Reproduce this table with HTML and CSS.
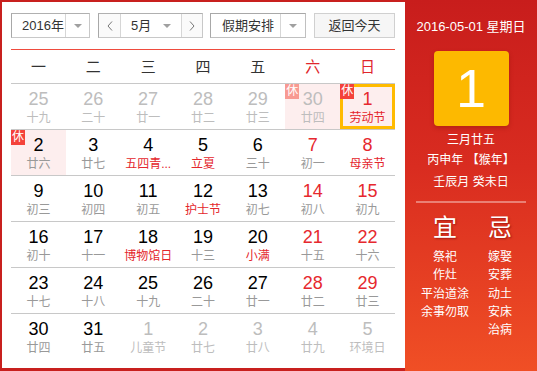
FILE: index.html
```html
<!DOCTYPE html>
<html lang="zh-CN">
<head>
<meta charset="utf-8">
<title>万年历</title>
<link rel="stylesheet" href="styles.css">
</head>
<body>
<div class="cal">
  <div class="main">
    <div class="toolbar">
      <div class="sel sel-year">
        <span class="sel-text">2016年</span>
        <span class="sel-arrow"><i class="tri"></i></span>
      </div>
      <div class="sel sel-month">
        <span class="nav"><svg width="6" height="10" viewBox="0 0 6 10"><polyline points="5,0.5 1,5 5,9.5" fill="none" stroke="#777" stroke-width="1"/></svg></span>
        <span class="month-mid"><span class="sel-text">5月</span><i class="tri"></i></span>
        <span class="nav nav-next"><svg width="6" height="10" viewBox="0 0 6 10"><polyline points="1,0.5 5,5 1,9.5" fill="none" stroke="#777" stroke-width="1"/></svg></span>
      </div>
      <div class="sel sel-holiday">
        <span class="sel-text">假期安排</span>
        <span class="sel-arrow"><i class="tri"></i></span>
      </div>
      <div class="btn-today">返回今天</div>
    </div>

    <div class="grid">
      <div class="head">
        <span>一</span><span>二</span><span>三</span><span>四</span><span>五</span><span class="we">六</span><span class="we">日</span>
      </div>
      <div class="row">
        <div class="cell other"><b>25</b><em>十九</em></div>
        <div class="cell other"><b>26</b><em>二十</em></div>
        <div class="cell other"><b>27</b><em>廿一</em></div>
        <div class="cell other"><b>28</b><em>廿二</em></div>
        <div class="cell other"><b>29</b><em>廿三</em></div>
        <div class="cell other rest"><i class="badge badge-light">休</i><b>30</b><em>廿四</em></div>
        <div class="cell rest cur"><i class="badge">休</i><b class="red">1</b><em class="fest">劳动节</em></div>
      </div>
      <div class="row">
        <div class="cell rest"><i class="badge">休</i><b>2</b><em>廿六</em></div>
        <div class="cell"><b>3</b><em>廿七</em></div>
        <div class="cell"><b>4</b><em class="fest">五四青...</em></div>
        <div class="cell"><b>5</b><em class="fest">立夏</em></div>
        <div class="cell"><b>6</b><em>三十</em></div>
        <div class="cell"><b class="red">7</b><em>初一</em></div>
        <div class="cell"><b class="red">8</b><em class="fest">母亲节</em></div>
      </div>
      <div class="row">
        <div class="cell"><b>9</b><em>初三</em></div>
        <div class="cell"><b>10</b><em>初四</em></div>
        <div class="cell"><b>11</b><em>初五</em></div>
        <div class="cell"><b>12</b><em class="fest">护士节</em></div>
        <div class="cell"><b>13</b><em>初七</em></div>
        <div class="cell"><b class="red">14</b><em>初八</em></div>
        <div class="cell"><b class="red">15</b><em>初九</em></div>
      </div>
      <div class="row">
        <div class="cell"><b>16</b><em>初十</em></div>
        <div class="cell"><b>17</b><em>十一</em></div>
        <div class="cell"><b>18</b><em class="fest">博物馆日</em></div>
        <div class="cell"><b>19</b><em>十三</em></div>
        <div class="cell"><b>20</b><em class="fest">小满</em></div>
        <div class="cell"><b class="red">21</b><em>十五</em></div>
        <div class="cell"><b class="red">22</b><em>十六</em></div>
      </div>
      <div class="row">
        <div class="cell"><b>23</b><em>十七</em></div>
        <div class="cell"><b>24</b><em>十八</em></div>
        <div class="cell"><b>25</b><em>十九</em></div>
        <div class="cell"><b>26</b><em>二十</em></div>
        <div class="cell"><b>27</b><em>廿一</em></div>
        <div class="cell"><b class="red">28</b><em>廿二</em></div>
        <div class="cell"><b class="red">29</b><em>廿三</em></div>
      </div>
      <div class="row last">
        <div class="cell"><b>30</b><em>廿四</em></div>
        <div class="cell"><b>31</b><em>廿五</em></div>
        <div class="cell other"><b>1</b><em>儿童节</em></div>
        <div class="cell other"><b>2</b><em>廿七</em></div>
        <div class="cell other"><b>3</b><em>廿八</em></div>
        <div class="cell other"><b>4</b><em>廿九</em></div>
        <div class="cell other"><b>5</b><em>环境日</em></div>
      </div>
    </div>
  </div>

  <div class="side">
    <div class="side-date">2016-05-01 星期日</div>
    <div class="side-day">1</div>
    <div class="side-lunar l1">三月廿五</div>
    <div class="side-lunar l2">丙申年 【猴年】</div>
    <div class="side-lunar l3">壬辰月 癸未日</div>
    <div class="side-line"></div>
    <div class="yiji">
      <div class="yj-col">
        <div class="yj-title">宜</div>
        <div class="yj-item">祭祀</div>
        <div class="yj-item">作灶</div>
        <div class="yj-item">平治道涂</div>
        <div class="yj-item">余事勿取</div>
      </div>
      <div class="yj-col">
        <div class="yj-title">忌</div>
        <div class="yj-item">嫁娶</div>
        <div class="yj-item">安葬</div>
        <div class="yj-item">动土</div>
        <div class="yj-item">安床</div>
        <div class="yj-item">治病</div>
      </div>
    </div>
  </div>
</div>
</body>
</html>
```

FILE: styles.css
```css
* { box-sizing: border-box; }
html, body { margin: 0; padding: 0; }
body {
  font-family: "Liberation Sans", "Noto Sans CJK SC", sans-serif;
  background: #fff;
}
.cal {
  width: 537px;
  height: 371px;
  display: flex;
}
.main {
  width: 405px;
  height: 371px;
  border-left: 2px solid #c8201e;
  border-top: 2px solid #c8201e;
  border-bottom: 3px solid #c8201e;
  padding: 11px 10px 0 9px;
  background: #fff;
}

/* toolbar */
.toolbar {
  display: flex;
  height: 25px;
  font-size: 13px;
  color: #333;
}
.sel {
  display: flex;
  height: 25px;
  border: 1px solid #c8c8c8;
  border-top-color: #b0b0b0;
  border-left-color: #a8a8a8;
  background: #fff;
}
.sel-text {
  line-height: 23px;
  padding-left: 10px;
  flex: 1;
}
.sel-arrow {
  display: flex;
  align-items: center;
  justify-content: center;
  border-left: 1px solid #d6d6d6;
}
.tri {
  display: block;
  width: 0;
  height: 0;
  border-left: 4px solid transparent;
  border-right: 4px solid transparent;
  border-top: 4px solid #a0a0a0;
}
.sel-year { width: 79px; }
.sel-year .sel-arrow { width: 24px; }
.sel-month { width: 105px; margin-left: 8px; }
.nav {
  width: 21px;
  display: flex;
  align-items: center;
  justify-content: center;
  background: #fafafa;
}
.nav-next { border-left: 1px solid #d6d6d6; }
.month-mid {
  flex: 1;
  display: flex;
  align-items: center;
  border-left: 1px solid #d6d6d6;
  padding-right: 10px;
}
.month-mid .sel-text { padding-left: 10px; }
.sel-holiday { width: 96px; margin-left: 7px; border-color: #a8a8a8; border-bottom-color: #c0c0c0; border-right-color: #c0c0c0; }
.sel-holiday .sel-text { padding-left: 11px; }
.sel-holiday .sel-arrow { width: 25px; }
.btn-today {
  width: 81px;
  margin-left: 8px;
  height: 25px;
  border: 1px solid #d0d0d0;
  background: #f6f6f6;
  text-align: center;
  line-height: 23px;
}

/* grid */
.grid {
  margin-top: 11px;
  border-top: 1px solid #ef4b3e;
}
.head {
  display: grid;
  grid-template-columns: repeat(7, 1fr);
  height: 34px;
  border-bottom: 1px solid #c8c8c8;
  font-size: 15px;
  line-height: 33px;
  text-align: center;
  color: #333;
}
.head .we { color: #e0262c; }
.row {
  display: grid;
  grid-template-columns: repeat(7, 1fr);
  height: 46px;
  border-bottom: 1px solid #c8c8c8;
}
.row.last { border-bottom: none; }
.cell {
  position: relative;
  text-align: center;
  padding-top: 4px;
  min-width: 0;
}
.cell b {
  display: block;
  font-weight: normal;
  font-size: 18px;
  line-height: 22px;
  color: #000;
}
.cell em {
  display: block;
  font-style: normal;
  font-size: 12px;
  line-height: 16px;
  color: #999;
  white-space: nowrap;
}
.cell b.red { color: #e6282e; }
.cell em.fest { color: #e4262c; }
.cell.other b { color: #bdbdbd; }
.cell.other em { color: #bdbdbd; }
.cell.rest { background: #fdeeee; height: 45px; }
.cell.cur {
  border: 3px solid #ffbb00;
  padding-top: 1px;
}
.badge {
  position: absolute;
  left: 0;
  top: 0;
  width: 14px;
  height: 15px;
  background: #f4423a;
  color: #fff;
  font-style: normal;
  font-size: 12px;
  line-height: 15px;
  text-align: center;
}
.cur .badge { left: -3px; top: -3px; }
.badge-light { background: #f89a92; }

/* side panel */
.side {
  flex: 1;
  height: 371px;
  background: linear-gradient(180deg, #c81d1c 0%, #d92c20 45%, #f04f25 100%);
  color: #fff;
  text-align: center;
  padding-top: 17px;
}
.side-date {
  font-size: 13px;
  line-height: 20px;
}
.side-day {
  width: 75px;
  height: 75px;
  margin: 14px auto 0;
  background: #fdb900;
  border-radius: 4px;
  box-shadow: 0 2px 4px rgba(120, 20, 0, 0.35);
  font-size: 54px;
  line-height: 75px;
}
.side-lunar {
  font-size: 12px;
  line-height: 20px;
}
.side-lunar.l1 { margin-top: 4px; }
.side-lunar.l3 { margin-top: 2px; }
.side-line {
  width: 110px;
  height: 2px;
  margin: 9px auto 0;
  background: rgba(255, 255, 255, 0.38);
}
.yiji {
  display: flex;
  justify-content: center;
  padding-left: 3px;
  margin-top: 10px;
}
.yj-col { width: 55px; }
.yj-title {
  font-size: 24px;
  line-height: 30px;
  text-shadow: 1px 1px 2px rgba(110, 0, 0, 0.55);
  margin-bottom: 5px;
}
.yj-item {
  font-size: 12px;
  line-height: 18.3px;
  white-space: nowrap;
}
```
